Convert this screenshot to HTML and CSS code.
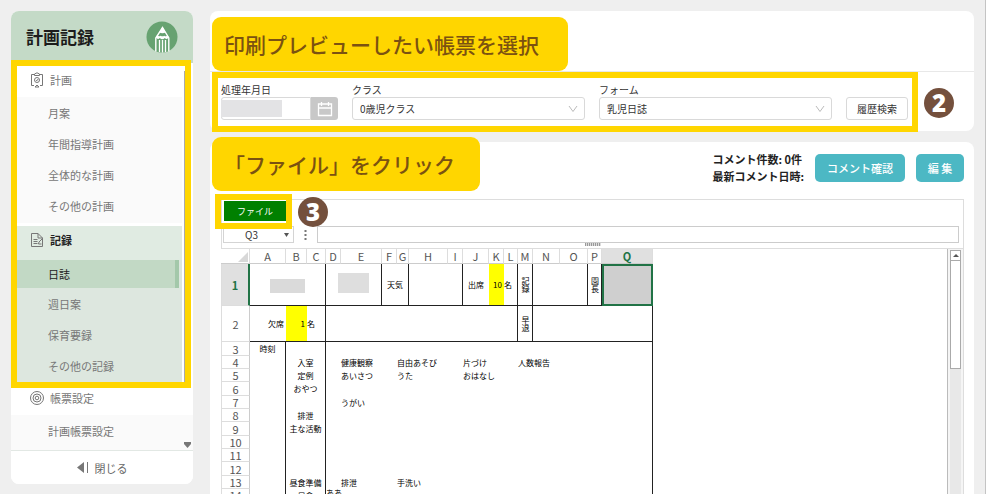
FILE: index.html
```html
<!DOCTYPE html>
<html lang="ja">
<head>
<meta charset="utf-8">
<title>計画記録</title>
<link rel="stylesheet" href="styles.css">
</head>
<body>
<aside class="sidebar">
  <header class="side-head">
    <h1>計画記録</h1>
    <svg class="logo" viewBox="0 0 32 32" aria-hidden="true">
      <circle cx="16" cy="16" r="15.500" fill="#67a271"/>
      <path d="M9.800 30.500V17L16.500 6.500 22.800 17v13.500" fill="none" stroke="#fff" stroke-width="1.400"/>
      <path d="M16.500 5.500 13.300 11.500q3 1.300 6.400 0zM9.800 16.500q2 2.500 4 .5 2.500 2.500 5 0 2 2 4-.5l-1-2q-2 1.500-3.500.3-2 1-3.500 0-1.500.8-3.800-.3z" fill="#fff"/>
      <path d="M13.500 19v12M16.500 19v12.500M19.500 19v12" stroke="#fff" stroke-width="1.300"/>
    </svg>
  </header>
  <nav class="side-nav">
    <section class="group plans">
      <a class="group-title" href="#">
        <svg viewBox="0 0 14 16" class="nav-icon" aria-hidden="true"><path d="M4 2.500H1.500v11H4M10 2.500h2.500v11H10M4.500 3.500V2L7 .8 9.500 2v1.500zM5 15l2-2 2 2z"/><circle cx="7" cy="8" r="2.500"/><path d="m6 8 .8.8L8.200 7"/></svg>
        計画</a>
      <ul>
        <li><a href="#">月案</a></li>
        <li><a href="#">年間指導計画</a></li>
        <li><a href="#">全体的な計画</a></li>
        <li><a href="#">その他の計画</a></li>
      </ul>
    </section>
    <section class="group current">
      <a class="group-title" href="#">
        <svg viewBox="0 0 14 16" class="nav-icon" aria-hidden="true"><path d="M8 1.500H1.500v13h11V6zM8 1.500V6h4.500M3.500 7.500h4M3.500 9.500h4M3.500 11.500h4M8.500 12l.5-2 3.500-3.500M8.500 12h3"/></svg>
        記録</a>
      <ul>
        <li><a class="selected" href="#">日誌</a></li>
        <li><a href="#">週日案</a></li>
        <li><a href="#">保育要録</a></li>
        <li><a href="#">その他の記録</a></li>
      </ul>
    </section>
    <section class="group settings">
      <a class="group-title" href="#">
        <svg viewBox="0 0 14 16" class="nav-icon" aria-hidden="true"><circle cx="7" cy="8" r="6.500"/><circle cx="7" cy="8" r="4"/><circle cx="7" cy="8" r="1.800"/></svg>
        帳票設定</a>
      <ul>
        <li><a href="#">計画帳票設定</a></li>
      </ul>
    </section>
    <i class="side-thumb"></i>
    <svg class="side-down" viewBox="0 0 7 6" aria-hidden="true"><path d="M0 0h7v2L3.500 6 0 2z" fill="#777"/></svg>
  </nav>
  <button class="side-close" type="button">
    <svg viewBox="0 0 12 11" aria-hidden="true"><path d="M7 0v11L0 5.500zM10 0h1v11h-1z" fill="#777"/></svg>
    閉じる</button>
  <div class="frame frame-side"></div>
</aside>

<main class="main">
  <section class="panel search">
    <div class="title-bar"><p class="callout">印刷プレビューしたい帳票を選択</p></div>
    <form class="filters">
      <div class="field date">
        <label for="date">処理年月日</label>
        <div class="control"><input id="date" type="text"><i class="mask"></i>
          <button type="button" aria-label="カレンダー"><svg viewBox="0 0 16 16"><path d="M1.500 3h13v11.500h-13zM1.500 7h13M4.500 1v4M11.500 1v4" fill="none" stroke="#fff" stroke-width="1.300"/></svg></button>
        </div>
      </div>
      <div class="field">
        <label for="class">クラス</label>
        <div class="control"><select id="class"><option>0歳児クラス</option></select>
          <svg class="chevron" viewBox="0 0 10 8"><path d="m1 1 4 5.500L9 1"/></svg></div>
      </div>
      <div class="field">
        <label for="form">フォーム</label>
        <div class="control"><select id="form"><option>乳児日誌</option></select>
          <svg class="chevron" viewBox="0 0 10 8"><path d="m1 1 4 5.500L9 1"/></svg></div>
      </div>
      <button class="history" type="button">履歴検索</button>
    </form>
    <div class="frame frame-search"></div>
    <span class="step step-two">2</span>
  </section>

  <section class="panel journal">
    <div class="toolbar">
      <div class="comments"><p>コメント件数: 0件</p><p>最新コメント日時:</p></div>
      <button class="action" type="button">コメント確認</button>
      <button class="action small" type="button">編 集</button>
    </div>
    <div class="ribbon">
      <button class="file" type="button">ファイル</button>
      <div class="formula">
        <div class="name-box"><span>Q3</span><svg viewBox="0 0 5 4"><path d="M0 0h5L2.500 4z" fill="#555"/></svg></div>
        <svg class="dots" viewBox="0 0 3 11"><path d="M.5 1h2v2h-2zM.5 5h2v2h-2zM.5 9h2v2h-2z" fill="#777"/></svg>
        <input type="text" aria-label="数式">
      </div>
      <i class="grip"></i>
    </div>
    <div class="sheet">
      <div class="viewport">
        <table>
          <colgroup><col class="w29"><col class="w36"><col class="w21"><col class="w19"><col class="w15"><col class="w41"><col class="w15"><col class="w12"><col class="w39"><col class="w15"><col class="w26"><col class="w15"><col class="w14"><col class="w15"><col class="w27"><col class="w28"><col class="w14"><col class="w51"></colgroup>
          <thead><tr><th class="corner"><svg viewBox="0 0 10 10"><path d="M10 0v10H0z" fill="#d8d8d8"/></svg></th><th>A</th><th>B</th><th>C</th><th>D</th><th>E</th><th>F</th><th>G</th><th>H</th><th>I</th><th>J</th><th>K</th><th>L</th><th>M</th><th>N</th><th>O</th><th>P</th><th class="on">Q</th></tr></thead>
          <tbody>
            <tr class="tall"><th class="on">1</th><td class="r b mid" colspan="3"><i class="blur wide"></i></td><td class="r b mid" colspan="2"><i class="blur"></i></td><td class="r b mid" colspan="2">天気</td><td class="r b" colspan="2"></td><td class="b mid">出席</td><td class="b end yellow">10</td><td class="r b">名</td><td class="r b mid"><span class="vert">記録</span></td><td class="r b" colspan="2"></td><td class="r b mid"><span class="vert">園長</span></td><td class="active"></td></tr>
            <tr class="medium"><th>2</th><td class="b end">欠席</td><td class="b end yellow">1</td><td class="r b">名</td><td class="r b" colspan="9"></td><td class="r b mid"><span class="vert">早退</span></td><td class="r b" colspan="4"></td></tr>
            <tr><th>3</th><td class="r mid">時刻</td><td class="r" colspan="2"></td><td class="r" colspan="14"></td></tr>
            <tr><th>4</th><td class="r"></td><td class="r mid" colspan="2">入室</td><td></td><td colspan="2">健康観察</td><td colspan="3">自由あそび</td><td colspan="3">片づけ</td><td class="r" colspan="5">人数報告</td></tr>
            <tr><th>5</th><td class="r"></td><td class="r mid" colspan="2">定例</td><td></td><td colspan="2">あいさつ</td><td colspan="3">うた</td><td class="r" colspan="8">おはなし</td></tr>
            <tr><th>6</th><td class="r"></td><td class="r mid" colspan="2">おやつ</td><td class="r" colspan="14"></td></tr>
            <tr><th>7</th><td class="r"></td><td class="r" colspan="2"></td><td></td><td class="r" colspan="13">うがい</td></tr>
            <tr><th>8</th><td class="r"></td><td class="r mid" colspan="2">排泄</td><td class="r" colspan="14"></td></tr>
            <tr><th>9</th><td class="r"></td><td class="r mid" colspan="2">主な活動</td><td class="r" colspan="14"></td></tr>
            <tr><th>10</th><td class="r"></td><td class="r" colspan="2"></td><td class="r" colspan="14"></td></tr>
            <tr><th>11</th><td class="r"></td><td class="r" colspan="2"></td><td class="r" colspan="14"></td></tr>
            <tr><th>12</th><td class="r"></td><td class="r" colspan="2"></td><td class="r" colspan="14"></td></tr>
            <tr><th>13</th><td class="r"></td><td class="r mid" colspan="2">昼食準備</td><td></td><td colspan="2">排泄</td><td class="r" colspan="11">手洗い</td></tr>
            <tr><th>14</th><td class="r"></td><td class="r mid" colspan="2">昼食</td><td class="r top" colspan="14">ああ</td></tr>
          </tbody>
        </table>
      </div>
      <div class="scroll"><i class="up"><svg viewBox="0 0 6 3"><path d="M3 0 6 3H0z" fill="#555"/></svg></i><i class="thumb"></i></div>
    </div>
    <p class="callout callout-file">「ファイル」をクリック</p>
    <div class="frame frame-file"></div>
    <span class="step step-three">3</span>
  </section>
</main>
</body>
</html>
```
FILE: styles.css
```css
* { box-sizing: border-box; }

body {
  margin: 0;
  height: 100vh;
  overflow: hidden;
  display: flex;
  gap: 17px;
  padding: 11px 11px 0;
  background: #efefef;
  border-right: 1px solid #c4c4c4;
  color: #333;
  font-family: "Noto Sans CJK JP", sans-serif;
  font-size: 11px;
}

h1, p, ul { margin: 0; padding: 0; }
ul { list-style: none; }
a { color: inherit; text-decoration: none; }
button, input, select { font: inherit; color: inherit; margin: 0; padding: 0; }
svg { display: block; }

/* sidebar */
.sidebar {
  position: relative;
  flex: 0 0 182px;
  display: flex;
  flex-direction: column;
  margin-bottom: 10px;
  background: #fff;
  border-radius: 8px;
}
.side-head {
  display: flex;
  align-items: center;
  justify-content: space-between;
  height: 52px;
  padding: 0 15px;
  background: #c4dac7;
  border-radius: 8px 8px 0 0;
}
.side-head h1 { font-size: 17px; line-height: 24px; color: #1c1c1c; }
.logo { width: 32px; height: 32px; }
.side-nav {
  position: relative;
  flex: 1;
  min-height: 0;
  overflow: hidden;
  padding: 3px 11px 0 0;
  color: #777;
}
.group-title {
  display: flex;
  align-items: center;
  gap: 6px;
  height: 28px;
  padding-left: 19px;
}
.nav-icon { width: 14px; height: 16px; fill: none; stroke: #777; stroke-width: 1; }
.group ul { background: #fafafa; }
.group li a { display: flex; align-items: center; height: 31px; padding-left: 37px; }
.plans .group-title { margin-bottom: 3px; }
.plans ul { padding-bottom: 2px; }
.current { margin-top: 3px; background: #e0ebe2; }
.current .group-title { color: #222; font-weight: bold; }
.current ul { padding: 6px 0 3px; background: linear-gradient(#e0ebe2 6px, #dde7df 6px); }
.group li .selected {
  height: 28px;
  margin-right: 3px;
  background: #c2d9c5;
  border-right: 4px solid #a3c8aa;
  color: #222;
}
.settings .group-title { margin-bottom: 3px; }
.settings ul { margin-right: -11px; padding-bottom: 4px; }
.side-thumb {
  position: absolute;
  top: 8px;
  right: 8px;
  width: 1px;
  height: 315px;
  background: #aaa;
}
.side-down { position: absolute; right: 2px; bottom: 2px; width: 7px; height: 6px; }
.side-close {
  display: flex;
  align-items: center;
  justify-content: center;
  gap: 6px;
  height: 34px;
  border: 0;
  border-top: 1px solid #e2e8e4;
  border-radius: 0 0 8px 8px;
  background: #fff;
  color: #666;
}
.side-close svg { width: 12px; height: 11px; }

/* guide marks */
.frame { position: absolute; border: 6px solid #ffd600; pointer-events: none; }
.frame-side { top: 49px; left: 0; width: 180px; height: 328px; }
.frame-search { top: 61px; left: 2px; right: 56px; bottom: -1px; }
.frame-file { top: 52px; left: 5px; width: 77px; height: 35px; }
.callout {
  width: fit-content;
  height: 54px;
  padding: 0 24px 0 12px;
  border-radius: 9px;
  background: #ffd600;
  color: #7b5211;
  font-size: 21px;
  font-weight: 500;
  line-height: 54px;
}
.callout-file { position: absolute; top: -5px; left: 2px; padding-right: 25px; }
.step {
  position: absolute;
  width: 30px;
  height: 30px;
  border-radius: 50%;
  background: #74503d;
  color: #fff;
  font-family: "Open Sans", "Noto Sans", sans-serif;
  font-size: 24px;
  font-weight: 800;
  line-height: 30px;
  text-align: center;
}
.step-two { top: 77px; right: 20px; }
.step-three { top: 55px; left: 88px; }

/* panels */
.main { flex: 1; min-width: 0; display: flex; flex-direction: column; gap: 11px; }
.panel { position: relative; background: #fff; border-radius: 8px; }
.title-bar { padding: 6px 2px 0; border-bottom: 1px solid #e8e8e8; }
.search .callout { padding-right: 29px; }
.filters {
  display: flex;
  align-items: flex-end;
  gap: 14px;
  padding: 10px 66px 11px 11px;
  font-size: 10px;
}
.field { flex: 1; min-width: 0; }
.field.date { flex: 0 0 117px; }
.field label { display: block; height: 15px; line-height: 15px; }
.control { position: relative; display: flex; height: 23px; }
.control input, .control select, .history {
  width: 100%;
  min-width: 0;
  height: 23px;
  border: 1px solid #d9d9d9;
  border-radius: 3px;
  background: #fff;
}
.control select { appearance: none; padding-left: 7px; }
.chevron {
  position: absolute;
  top: 8px;
  right: 7px;
  width: 10px;
  height: 8px;
  fill: none;
  stroke: #bbb;
  pointer-events: none;
}
.control input { border-radius: 3px 0 0 3px; }
.control button {
  flex: 0 0 27px;
  display: grid;
  place-items: center;
  border: 0;
  border-radius: 0 3px 3px 0;
  background: #c8c8c8;
}
.control button svg { width: 16px; height: 16px; }
.mask { position: absolute; top: 3px; left: 0; width: 61px; height: 17px; background: #e3e3e5; }
.filters .history { flex: 0 0 62px; }

.journal {
  flex: 1;
  min-height: 0;
  display: flex;
  flex-direction: column;
  padding: 12px 10px 0 11px;
  border-radius: 8px 8px 0 0;
}
.toolbar { display: flex; align-items: center; justify-content: flex-end; gap: 11px; height: 28px; margin-bottom: 17px; }
.comments { color: #222; font-weight: bold; line-height: 17px; }
.action {
  width: 90px;
  height: 28px;
  border: 0;
  border-radius: 5px;
  background: #4cb8c4;
  color: #fff;
  font-weight: 500;
}
.action.small { width: 48px; }

/* spreadsheet */
.ribbon {
  position: relative;
  height: 50px;
  padding: 1px;
  border: 1px solid #ddd;
}
.file {
  display: block;
  width: 62px;
  height: 20px;
  margin: 0 0 5px 1px;
  border: 0;
  background: #008000;
  color: #fff;
  font-size: 9px;
}
.formula { display: flex; align-items: center; height: 17px; padding-right: 3px; }
.name-box {
  position: relative;
  width: 71px;
  height: 17px;
  border: 1px solid #d4d4d4;
  font-size: 10px;
  line-height: 15px;
  text-align: center;
}
.name-box span { padding-right: 14px; }
.name-box svg { position: absolute; top: 6px; right: 4px; width: 5px; height: 4px; }
.dots { width: 3px; height: 11px; margin: 0 10px; }
.formula input { flex: 1; min-width: 0; height: 17px; border: 1px solid #ccc; background: #fff; }
.grip {
  position: absolute;
  bottom: 2px;
  left: 50%;
  width: 16px;
  height: 3px;
  margin-left: -8px;
  background: repeating-linear-gradient(90deg, #999 0 1px, #ddd 1px 2px);
}
.sheet { flex: 1; min-height: 0; display: flex; border-right: 1px solid #ddd; }
.viewport { flex: 1; min-width: 0; overflow: hidden; border-right: 1px solid #bbb; }
table {
  table-layout: fixed;
  width: 432px;
  border-collapse: separate;
  border-spacing: 0;
  color: #000;
}
.w12 { width: 12px; }
.w14 { width: 14px; }
.w15 { width: 15px; }
.w19 { width: 19px; }
.w21 { width: 21px; }
.w26 { width: 26px; }
.w27 { width: 27px; }
.w28 { width: 28px; }
.w29 { width: 29px; }
.w36 { width: 36px; }
.w39 { width: 39px; }
.w41 { width: 41px; }
.w51 { width: 51px; }
th, td { padding: 0; height: 13px; line-height: 12px; white-space: nowrap; }
tr:nth-child(3n) > * { height: 14px; }
th { color: #555; font-size: 11px; font-weight: normal; text-align: center; border: 0 solid #ddd; }
thead th { height: 15px; border-right-width: 1px; border-bottom: 1px solid #ccc; }
tbody th { border-width: 0 1px 1px; border-right-color: #ccc; }
td { font-size: 8px; text-align: left; }
.corner svg { width: 10px; height: 10px; margin: 2px 1px 0 auto; }
th.on { background: #e0e0e0; color: #217346; font-weight: bold; }
tbody th.on { border-right: 2px solid #217346; }
tbody .tall > * { height: 42px; }
tbody .medium > * { height: 36px; }
.r { border-right: 1px solid #222; }
.b { border-bottom: 1px solid #222; }
.mid { text-align: center; }
.end { text-align: right; padding-right: 2px; }
.top { vertical-align: top; line-height: 8px; }
.yellow { background: #ff0; }
.active { border: 2px solid #217346; background: #cfcfcf; }
.vert { display: inline-block; writing-mode: vertical-rl; vertical-align: middle; }
.blur { display: block; width: 31px; height: 20px; margin: 0 auto 4px; background: #dedede; }
.blur.wide { width: 35px; height: 14px; margin: 2px auto 0; background: #dadada; }
.scroll { width: 15px; padding: 1px 2px 0; background: #f5f5f5; }
.scroll::after { content: ""; display: block; height: 100%; background: #e8e8e8; }
.up, .thumb { display: grid; place-items: center; border: 1px solid #aaa; background: #fff; }
.up { height: 11px; }
.up svg { width: 6px; height: 3px; }
.thumb { height: 108px; border-top: 0; }
```
